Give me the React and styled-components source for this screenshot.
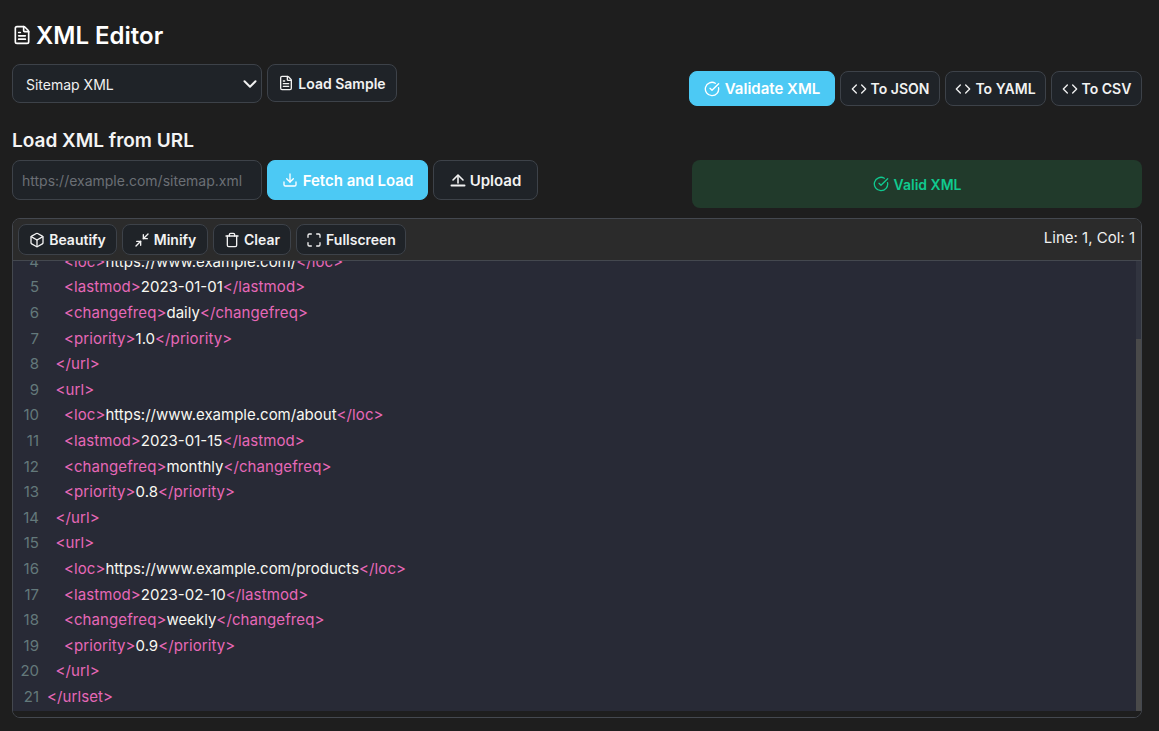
import React, { useLayoutEffect, useRef } from "react";
import styled, { createGlobalStyle } from "styled-components";
import {
  FileText,
  CircleCheckBig,
  Code,
  Download,
  Box,
  Minimize2,
  Trash,
  Maximize,
  ChevronDown,
} from "lucide-react";

const GlobalStyle = createGlobalStyle`
  html, body {
    margin: 0;
    padding: 0;
    height: 100%;
    background: #1e1e1e;
    overflow: hidden;
  }
  * {
    box-sizing: border-box;
  }
  body {
    font-family: Inter, "Noto Sans", sans-serif;
    color: #fff;
  }
`;

const xmlLines = [
  [0, '<?xml version="1.0" encoding="UTF-8"?>'],
  [0, '<urlset xmlns="http://www.sitemaps.org/schemas/sitemap/0.9">'],
  [1, "<url>"],
  [2, "<loc>", "https://www.example.com/", "</loc>"],
  [2, "<lastmod>", "2023-01-01", "</lastmod>"],
  [2, "<changefreq>", "daily", "</changefreq>"],
  [2, "<priority>", "1.0", "</priority>"],
  [1, "</url>"],
  [1, "<url>"],
  [2, "<loc>", "https://www.example.com/about", "</loc>"],
  [2, "<lastmod>", "2023-01-15", "</lastmod>"],
  [2, "<changefreq>", "monthly", "</changefreq>"],
  [2, "<priority>", "0.8", "</priority>"],
  [1, "</url>"],
  [1, "<url>"],
  [2, "<loc>", "https://www.example.com/products", "</loc>"],
  [2, "<lastmod>", "2023-02-10", "</lastmod>"],
  [2, "<changefreq>", "weekly", "</changefreq>"],
  [2, "<priority>", "0.9", "</priority>"],
  [1, "</url>"],
  [0, "</urlset>"],
];

export default function App() {
  const scrollRef = useRef(null);

  useLayoutEffect(() => {
    scrollRef.current.scrollTop = scrollRef.current.scrollHeight;
  }, []);

  return (
    <Page>
      <GlobalStyle />
      <Title>
        <TitleIcon size={20} />
        XML Editor
      </Title>

      <TopRow>
        <Group>
          <SelectBox>
            Sitemap XML
            <ChevronDown size={22} strokeWidth={2.2} />
          </SelectBox>
          <Button $width={130}>
            <FileText size={16} />
            Load Sample
          </Button>
        </Group>
        <ActionGroup>
          <PrimaryButton $width={146} $height={35}>
            <CircleCheckBig size={16} />
            Validate XML
          </PrimaryButton>
          <ConvertButton $width={100}>
            <Code size={16} />
            To JSON
          </ConvertButton>
          <ConvertButton $width={101}>
            <Code size={16} />
            To YAML
          </ConvertButton>
          <ConvertButton $width={91}>
            <Code size={16} />
            To CSV
          </ConvertButton>
        </ActionGroup>
      </TopRow>

      <SectionTitle>Load XML from URL</SectionTitle>

      <UrlRow>
        <Group>
          <UrlInput placeholder="https://example.com/sitemap.xml" readOnly />
          <PrimaryButton $width={161} $height={40}>
            <Download size={16} />
            Fetch and Load
          </PrimaryButton>
          <UploadButton>
            <svg width="16" height="16" viewBox="0 0 16 16" fill="none" stroke="currentColor" strokeWidth="1.6" strokeLinecap="round" strokeLinejoin="round">
              <path d="M3 8 8 3l5 5" />
              <path d="M8 4v7" />
              <path d="M1.5 13.5h13" strokeWidth="2" />
            </svg>
            Upload
          </UploadButton>
        </Group>
        <ValidBanner>
          <CircleCheckBig size={16} />
          Valid XML
        </ValidBanner>
      </UrlRow>

      <Editor>
        <Toolbar>
          <Group>
            <ToolButton $width={99}>
              <Box size={16} />
              Beautify
            </ToolButton>
            <ToolButton $width={86}>
              <Minimize2 size={16} />
              Minify
            </ToolButton>
            <ToolButton $width={78}>
              <Trash size={16} />
              Clear
            </ToolButton>
            <ToolButton $width={110}>
              <Maximize size={16} />
              Fullscreen
            </ToolButton>
          </Group>
          <CursorInfo>Line: 1, Col: 1</CursorInfo>
        </Toolbar>
        <CodeArea>
          <CodeScroll ref={scrollRef}>
            {xmlLines.map(([indent, open, value, close], i) => (
              <CodeLine key={i}>
                <LineNumber>{i + 1}</LineNumber>
                <LineText>
                  {"  ".repeat(indent)}
                  <Tag>{open}</Tag>
                  {value}
                  {close && <Tag>{close}</Tag>}
                </LineText>
              </CodeLine>
            ))}
          </CodeScroll>
          <ScrollTrack>
            <ScrollThumb />
          </ScrollTrack>
        </CodeArea>
        <BottomStrip />
      </Editor>
    </Page>
  );
}

const Page = styled.div`
  width: 1159px;
  height: 731px;
  padding: 21px 17px 13px 12px;
  background: #1e1e1e;
  display: flex;
  flex-direction: column;
  overflow: hidden;
`;

const Title = styled.h1`
  display: flex;
  align-items: center;
  gap: 4px;
  margin: 0;
  height: 30px;
  font-size: 24px;
  line-height: 30px;
  font-weight: 600;
  color: #fff;
`;

const TitleIcon = styled(FileText)`
  margin-top: -2px;
`;

const TopRow = styled.div`
  display: flex;
  justify-content: space-between;
  align-items: flex-start;
  margin-top: 13px;
  height: 42px;
`;

const Group = styled.div`
  display: flex;
  align-items: flex-start;
  gap: 5px;
`;

const ActionGroup = styled(Group)`
  margin-top: 7px;
`;

const SelectBox = styled.div`
  width: 250px;
  height: 39px;
  display: flex;
  align-items: center;
  justify-content: space-between;
  padding: 1px 0 0 13px;
  background: #1f2328;
  border: 1px solid #3d4249;
  border-radius: 8px;
  font-size: 14px;
  color: #f0f0f0;
`;

const Button = styled.button`
  display: inline-flex;
  align-items: center;
  justify-content: center;
  gap: 4px;
  width: ${(p) => p.$width}px;
  height: 38px;
  padding: 0;
  background: #1f2328;
  border: 1px solid #3d4249;
  border-radius: 8px;
  font-family: inherit;
  font-size: 14px;
  font-weight: 600;
  color: #f2f2f2;
`;

const ConvertButton = styled(Button)`
  height: 35px;
`;

const PrimaryButton = styled(Button)`
  height: ${(p) => p.$height}px;
  gap: 5px;
  background: #4cc9f4;
  border-color: #4cc9f4;
  color: #fff;
  font-size: 15px;
`;

const UploadButton = styled(Button)`
  width: 105px;
  height: 40px;
  font-size: 15px;
`;

const SectionTitle = styled.h2`
  margin: 22px 0 0;
  height: 26px;
  font-size: 19px;
  line-height: 26px;
  font-weight: 600;
  color: #f4f4f4;
`;

const UrlRow = styled.div`
  display: flex;
  justify-content: space-between;
  align-items: flex-start;
  margin-top: 6px;
  height: 58px;
`;

const UrlInput = styled.input`
  width: 250px;
  height: 40px;
  padding: 0 9px;
  background: #1f2328;
  border: 1px solid #3d4249;
  border-radius: 8px;
  font-family: inherit;
  font-size: 14px;
  color: #fff;
  &::placeholder {
    color: #6b6f75;
    opacity: 1;
  }
`;

const ValidBanner = styled.div`
  width: 450px;
  height: 48px;
  display: flex;
  align-items: center;
  justify-content: center;
  gap: 5px;
  background: #213a2b;
  border-radius: 8px;
  font-size: 14px;
  font-weight: 600;
  color: #10c98f;
`;

const Editor = styled.section`
  width: 1130px;
  height: 500px;
  display: flex;
  flex-direction: column;
  background: #1e1e1e;
  border: 1px solid #44484f;
  border-radius: 8px;
  overflow: hidden;
`;

const Toolbar = styled.div`
  flex: none;
  height: 42px;
  display: flex;
  align-items: flex-start;
  justify-content: space-between;
  padding: 5px 6px 0 5px;
  background: #2b2b2b;
  border-bottom: 1px solid #44484f;
`;

const ToolButton = styled(Button)`
  height: 31px;
`;

const CursorInfo = styled.span`
  font-size: 15px;
  line-height: 28px;
  color: #f0f0f0;
`;

const CodeArea = styled.div`
  position: relative;
  flex: 1;
  min-height: 0;
  background: #282a36;
`;

const CodeScroll = styled.div`
  height: 100%;
  overflow: hidden;
  padding-bottom: 2px;
`;

const CodeLine = styled.div`
  display: flex;
  height: 25.6px;
  font-size: 15px;
  line-height: 25.6px;
`;

const LineNumber = styled.span`
  flex: none;
  width: 26px;
  text-align: right;
  color: #64797b;
`;

const LineText = styled.span`
  margin-left: 8px;
  white-space: pre;
  color: #f8f8f2;
`;

const Tag = styled.span`
  color: #e668b8;
  letter-spacing: 0.1px;
`;

const ScrollTrack = styled.div`
  position: absolute;
  top: 0;
  right: 0;
  bottom: 0;
  width: 5px;
  background: #31343f;
`;

const ScrollThumb = styled.div`
  position: absolute;
  left: 0;
  right: 0;
  bottom: 0;
  height: 372px;
  background: #4a4a4a;
`;

const BottomStrip = styled.div`
  flex: none;
  height: 6px;
  background: #1e1e1e;
`;
